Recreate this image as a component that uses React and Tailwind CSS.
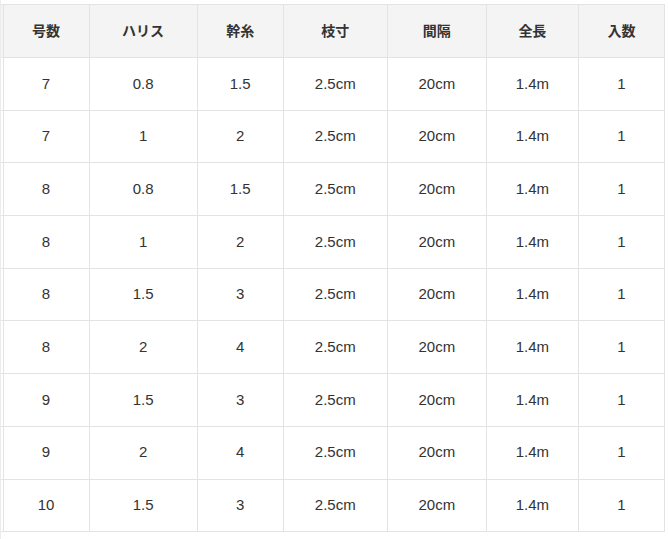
import React from "react";

const headers = ["号数", "ハリス", "幹糸", "枝寸", "間隔", "全長", "入数"];
const rows = [
  ["7", "0.8", "1.5"],
  ["7", "1", "2"],
  ["8", "0.8", "1.5"],
  ["8", "1", "2"],
  ["8", "1.5", "3"],
  ["8", "2", "4"],
  ["9", "1.5", "3"],
  ["9", "2", "4"],
  ["10", "1.5", "3"],
];
const widths = ["w-[86px]", "w-[108px]", "w-[86px]", "w-[104px]", "w-[99px]", "w-[92px]", "w-[86px]"];

export default function App() {
  return (
    <div className="w-[668px] h-[539px] bg-white pt-[4px] overflow-hidden border-l border-[#ececec]" style={{ fontFamily: '"Liberation Sans", "Noto Sans CJK JP", sans-serif' }}>
      <table className="border-collapse table-fixed w-[664px] text-[#333]">
        <thead>
          <tr className="h-[53px] bg-[#f4f4f4]">
            <th className="w-[2px] border border-[#e3e3e3] border-l-0 p-0"></th>
            {headers.map((h, i) => (
              <th key={i} className={`${widths[i]} border border-[#e3e3e3] p-0 text-[14px] font-bold text-center`}>
                {h}
              </th>
            ))}
          </tr>
        </thead>
        <tbody>
          {rows.map((r, i) => (
            <tr key={i} className="h-[52.7px]">
              <td className="border border-[#e3e3e3] border-l-0 p-0"></td>
              <td className="border border-[#e3e3e3] p-0 text-center text-[15px]">{r[0]}</td>
              <td className="border border-[#e3e3e3] p-0 text-center text-[15px]">{r[1]}</td>
              <td className="border border-[#e3e3e3] p-0 text-center text-[15px]">{r[2]}</td>
              <td className="border border-[#e3e3e3] p-0 text-center text-[15px]">2.5cm</td>
              <td className="border border-[#e3e3e3] p-0 text-center text-[15px]">20cm</td>
              <td className="border border-[#e3e3e3] p-0 text-center text-[15px]">1.4m</td>
              <td className="border border-[#e3e3e3] p-0 text-center text-[15px]">1</td>
            </tr>
          ))}
        </tbody>
      </table>
    </div>
  );
}
